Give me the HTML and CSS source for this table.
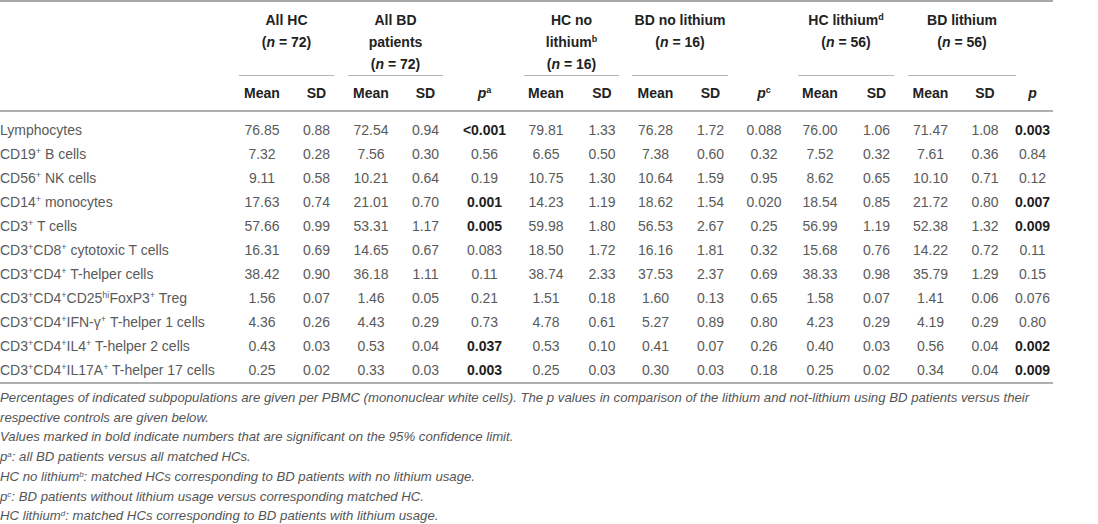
FILE: index.html
```html
<!DOCTYPE html>
<html lang="en">
  <head>
    <meta charset="UTF-8" />
    <meta name="viewport" content="width=device-width, initial-scale=1.0" />
    <title>Immune cell subpopulations</title>
    <link rel="stylesheet" href="styles.css">
  </head>
  <body>
    <div class="page">
      <table class="data">
        <colgroup>
          <col style="width: 235px" />
          <col style="width: 54px" />
          <col style="width: 55px" />
          <col style="width: 54px" />
          <col style="width: 55px" />
          <col style="width: 63px" />
          <col style="width: 60px" />
          <col style="width: 52px" />
          <col style="width: 55px" />
          <col style="width: 55px" />
          <col style="width: 52px" />
          <col style="width: 60px" />
          <col style="width: 53px" />
          <col style="width: 55px" />
          <col style="width: 54px" />
          <col style="width: 41px" />
        </colgroup>
        <thead>
          <tr class="groups">
            <th></th>
            <th colspan="2" class="grp"><div class="grp-in">All HC<br>(<i>n</i> = 72)</div></th>
            <th colspan="2" class="grp"><div class="grp-in">All BD<br>patients<br>(<i>n</i> = 72)</div></th>
            <th></th>
            <th colspan="2" class="grp grp-wide"><div class="grp-in">HC no<br>lithium<sup>b</sup><br>(<i>n</i> = 16)</div></th>
            <th colspan="2" class="grp"><div class="grp-in">BD no lithium<br>(<i>n</i> = 16)</div></th>
            <th></th>
            <th colspan="2" class="grp grp-wide"><div class="grp-in">HC lithium<sup>d</sup><br>(<i>n</i> = 56)</div></th>
            <th colspan="2" class="grp grp-last"><div class="grp-in">BD lithium<br>(<i>n</i> = 56)</div></th>
            <th></th>
          </tr>
          <tr class="subs">
            <th></th>
            <th>Mean</th><th>SD</th>
            <th>Mean</th><th>SD</th>
            <th><i>p</i><sup>a</sup></th>
            <th>Mean</th><th>SD</th>
            <th>Mean</th><th>SD</th>
            <th><i>p</i><sup>c</sup></th>
            <th>Mean</th><th>SD</th>
            <th>Mean</th><th>SD</th>
            <th><i>p</i></th>
          </tr>
        </thead>
        <tbody>
          <tr>
            <td class="label">Lymphocytes</td>
            <td>76.85</td><td>0.88</td><td>72.54</td><td>0.94</td><td class="sig">&lt;0.001</td>
            <td>79.81</td><td>1.33</td><td>76.28</td><td>1.72</td><td>0.088</td>
            <td>76.00</td><td>1.06</td><td>71.47</td><td>1.08</td><td class="sig">0.003</td>
          </tr>
          <tr>
            <td class="label">CD19<sup>+</sup> B cells</td>
            <td>7.32</td><td>0.28</td><td>7.56</td><td>0.30</td><td>0.56</td>
            <td>6.65</td><td>0.50</td><td>7.38</td><td>0.60</td><td>0.32</td>
            <td>7.52</td><td>0.32</td><td>7.61</td><td>0.36</td><td>0.84</td>
          </tr>
          <tr>
            <td class="label">CD56<sup>+</sup> NK cells</td>
            <td>9.11</td><td>0.58</td><td>10.21</td><td>0.64</td><td>0.19</td>
            <td>10.75</td><td>1.30</td><td>10.64</td><td>1.59</td><td>0.95</td>
            <td>8.62</td><td>0.65</td><td>10.10</td><td>0.71</td><td>0.12</td>
          </tr>
          <tr>
            <td class="label">CD14<sup>+</sup> monocytes</td>
            <td>17.63</td><td>0.74</td><td>21.01</td><td>0.70</td><td class="sig">0.001</td>
            <td>14.23</td><td>1.19</td><td>18.62</td><td>1.54</td><td>0.020</td>
            <td>18.54</td><td>0.85</td><td>21.72</td><td>0.80</td><td class="sig">0.007</td>
          </tr>
          <tr>
            <td class="label">CD3<sup>+</sup> T cells</td>
            <td>57.66</td><td>0.99</td><td>53.31</td><td>1.17</td><td class="sig">0.005</td>
            <td>59.98</td><td>1.80</td><td>56.53</td><td>2.67</td><td>0.25</td>
            <td>56.99</td><td>1.19</td><td>52.38</td><td>1.32</td><td class="sig">0.009</td>
          </tr>
          <tr>
            <td class="label">CD3<sup>+</sup>CD8<sup>+</sup> cytotoxic T cells</td>
            <td>16.31</td><td>0.69</td><td>14.65</td><td>0.67</td><td>0.083</td>
            <td>18.50</td><td>1.72</td><td>16.16</td><td>1.81</td><td>0.32</td>
            <td>15.68</td><td>0.76</td><td>14.22</td><td>0.72</td><td>0.11</td>
          </tr>
          <tr>
            <td class="label">CD3<sup>+</sup>CD4<sup>+</sup> T-helper cells</td>
            <td>38.42</td><td>0.90</td><td>36.18</td><td>1.11</td><td>0.11</td>
            <td>38.74</td><td>2.33</td><td>37.53</td><td>2.37</td><td>0.69</td>
            <td>38.33</td><td>0.98</td><td>35.79</td><td>1.29</td><td>0.15</td>
          </tr>
          <tr>
            <td class="label">CD3<sup>+</sup>CD4<sup>+</sup>CD25<sup>hi</sup>FoxP3<sup>+</sup> Treg</td>
            <td>1.56</td><td>0.07</td><td>1.46</td><td>0.05</td><td>0.21</td>
            <td>1.51</td><td>0.18</td><td>1.60</td><td>0.13</td><td>0.65</td>
            <td>1.58</td><td>0.07</td><td>1.41</td><td>0.06</td><td>0.076</td>
          </tr>
          <tr>
            <td class="label">CD3<sup>+</sup>CD4<sup>+</sup>IFN-&gamma;<sup>+</sup> T-helper 1 cells</td>
            <td>4.36</td><td>0.26</td><td>4.43</td><td>0.29</td><td>0.73</td>
            <td>4.78</td><td>0.61</td><td>5.27</td><td>0.89</td><td>0.80</td>
            <td>4.23</td><td>0.29</td><td>4.19</td><td>0.29</td><td>0.80</td>
          </tr>
          <tr>
            <td class="label">CD3<sup>+</sup>CD4<sup>+</sup>IL4<sup>+</sup> T-helper 2 cells</td>
            <td>0.43</td><td>0.03</td><td>0.53</td><td>0.04</td><td class="sig">0.037</td>
            <td>0.53</td><td>0.10</td><td>0.41</td><td>0.07</td><td>0.26</td>
            <td>0.40</td><td>0.03</td><td>0.56</td><td>0.04</td><td class="sig">0.002</td>
          </tr>
          <tr>
            <td class="label">CD3<sup>+</sup>CD4<sup>+</sup>IL17A<sup>+</sup> T-helper 17 cells</td>
            <td>0.25</td><td>0.02</td><td>0.33</td><td>0.03</td><td class="sig">0.003</td>
            <td>0.25</td><td>0.03</td><td>0.30</td><td>0.03</td><td>0.18</td>
            <td>0.25</td><td>0.02</td><td>0.34</td><td>0.04</td><td class="sig">0.009</td>
          </tr>
        </tbody>
      </table>
      <div class="notes">
        <p>Percentages of indicated subpopulations are given per PBMC (mononuclear white cells). The p values in comparison of the lithium and not-lithium using BD patients versus their respective controls are given below.</p>
        <p>Values marked in bold indicate numbers that are significant on the 95% confidence limit.</p>
        <p>p<sup>a</sup>: all BD patients versus all matched HCs.</p>
        <p>HC no lithium<sup>b</sup>: matched HCs corresponding to BD patients with no lithium usage.</p>
        <p>p<sup>c</sup>: BD patients without lithium usage versus corresponding matched HC.</p>
        <p>HC lithium<sup>d</sup>: matched HCs corresponding to BD patients with lithium usage.</p>
      </div>
    </div>
  </body>
</html>
```

FILE: styles.css
```css
body {
  margin: 0;
  background: #ffffff;
  font-family: "Liberation Sans", Arial, sans-serif;
  color: #5a5a5a;
}

.page {
  width: 1053px;
}

.data {
  width: 1053px;
  table-layout: fixed;
  border-collapse: separate;
  border-spacing: 0;
  font-size: 14px;
}

.data sup {
  font-size: 9px;
  line-height: 0;
  vertical-align: 5px;
}

.data th {
  color: #222222;
  font-weight: bold;
  text-align: center;
  padding: 0;
}

.groups th {
  border-top: 2px solid #a8a8a8;
  vertical-align: top;
  padding-top: 7px;
  line-height: 22px;
}

.groups .grp {
  padding-left: 4px;
  padding-right: 10px;
}

.groups .grp-wide {
  padding-left: 8px;
  padding-right: 9px;
}

.groups .grp-last {
  padding-left: 5px;
  padding-right: 0;
}

.grp-in {
  height: 66px;
  border-bottom: 1px solid #b5b5b5;
}

.groups .grp-last .grp-in {
  margin-right: -4px;
}

.subs th {
  line-height: 22px;
  padding: 6px 0;
  border-bottom: 2px solid #b0b0b0;
}

.data td {
  text-align: center;
  height: 24px;
  line-height: 24px;
  padding: 0;
  white-space: nowrap;
}

.data tbody tr:first-child td {
  padding-top: 6px;
}

.data tbody tr:last-child td {
  border-bottom: 2px solid #b0b0b0;
}

.data td.label {
  text-align: left;
}

.data td.sig {
  font-weight: bold;
  color: #1e1e1e;
}

.notes {
  margin-top: 4px;
  font-size: 13.2px;
  font-style: italic;
  line-height: 19.7px;
  color: #555555;
}

.notes p {
  margin: 0;
}

.notes sup {
  font-size: 8px;
  line-height: 0;
  vertical-align: 4px;
}
```
